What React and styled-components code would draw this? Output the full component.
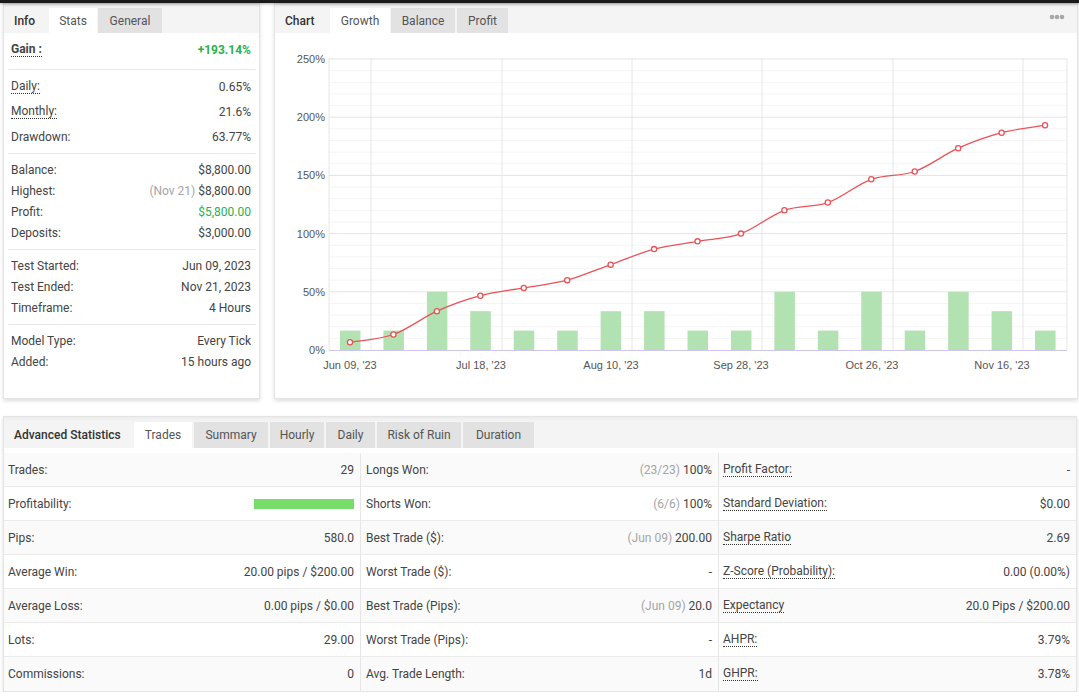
import React from 'react';
import styled, { createGlobalStyle } from 'styled-components';

const Global = createGlobalStyle`
  html, body { margin: 0; padding: 0; background: #fff; }
  body { font-family: Roboto, "Liberation Sans", Arial, sans-serif; font-size: 12px; color: #333; }
  * { box-sizing: border-box; }
`;

const TopBar = styled.div`
  height: 3px;
  background: #1b1b1b;
  box-shadow: 0 1px 3px rgba(0, 0, 0, 0.35);
  position: relative;
  z-index: 2;
`;

const Page = styled.div`
  padding: 0 1px 0 3px;
`;

const TopRow = styled.div`
  display: grid;
  grid-template-columns: 257px 804px;
  gap: 14px;
  height: 396px;
`;

const Panel = styled.div`
  background: #fff;
  border: 1px solid #e4e4e4;
  box-shadow: 0 2px 4px rgba(0, 0, 0, 0.13);
  display: flex;
  flex-direction: column;
  overflow: hidden;
`;

const BottomPanel = styled(Panel)`
  margin-top: 17px;
  width: 1074px;
`;

const TabBar = styled.div`
  display: flex;
  align-items: flex-end;
  gap: ${p => p.$gap ?? 1}px;
  height: ${p => p.$h || 29}px;
  background: linear-gradient(#ececec, #f4f4f4 4px);
  flex: none;
  padding-right: 12px;
`;

const Tab = styled.div`
  flex: none;
  width: ${p => p.$w}px;
  margin-left: ${p => p.$ml || 0}px;
  height: ${p => p.$h || 25}px;
  display: flex;
  align-items: center;
  justify-content: ${p => (p.$kind === 'label' ? 'flex-start' : 'center')};
  padding-left: ${p => (p.$kind === 'label' ? 10 : 0)}px;
  font-size: 12px;
  color: ${p => (p.$kind === 'label' ? '#333' : '#555')};
  font-weight: ${p => (p.$kind === 'label' ? 500 : 400)};
  background: ${p => (p.$kind === 'active' ? '#fff' : p.$kind === 'idle' ? '#e2e2e2' : 'transparent')};
  white-space: nowrap;
`;

const MoreDots = styled.div`
  margin-left: auto;
  align-self: center;
  margin-top: -3px;
  display: flex;
`;

const StatsBody = styled.div`
  padding: 0 3px 0 4px;
  display: flex;
  flex-direction: column;
`;

const Group = styled.div`
  padding: ${p => p.$pad || '5px 0 6px'};
  border-bottom: ${p => (p.$last ? 'none' : '1px solid #e6e6e6')};
`;

const StatRow = styled.div`
  display: flex;
  justify-content: space-between;
  align-items: center;
  height: ${p => p.$h || 21}px;
  padding: 0 5px 0 3px;
  color: #444;
`;

const Label = styled.span`
  color: #444;
  font-weight: ${p => (p.$bold ? 700 : 400)};
  ${p => p.$dotted && 'border-bottom: 1px dotted #333; line-height: 13px;'}
`;

const Value = styled.span`
  color: ${p => (p.$green ? '#27b14f' : '#444')};
  font-weight: ${p => (p.$bold ? 700 : 400)};
  white-space: nowrap;
`;

const Muted = styled.span`
  color: #a5a5a5;
`;

const ChartBody = styled.div`
  flex: 1;
`;

const ChartSvg = styled.svg`
  display: block;
  width: 802px;
  height: 366px;
`;

const Table = styled.div`
  display: grid;
  grid-template-columns: 356px 358px 358px;
  margin-top: 5px;
`;

const Column = styled.div`
  display: flex;
  flex-direction: column;
  & + & { border-left: 1px solid #e6e6e6; }
`;

const Cell = styled.div`
  display: flex;
  justify-content: space-between;
  align-items: center;
  height: 34px;
  padding: 0 6px 0 ${p => p.$pl || 5}px;
  border-bottom: 1px solid #ebebeb;
  background: ${p => (p.$odd ? '#fafafa' : '#fff')};
  &:last-child { border-bottom: none; }
  color: #444;
`;

const ProfitBar = styled.div`
  width: 100px;
  height: 10px;
  background: #78dc6a;
`;

const leftGroups = [
  { pad: '4px 0 4px', h: 25, rows: [
    ['Daily:', '0.65%', true],
    ['Monthly:', '21.6%', true],
    ['Drawdown:', '63.77%'],
  ] },
  { rows: [
    ['Balance:', '$8,800.00'],
    ['Highest:', <><Muted>(Nov 21)</Muted> $8,800.00</>],
    ['Profit:', '$5,800.00', false, true],
    ['Deposits:', '$3,000.00'],
  ] },
  { rows: [
    ['Test Started:', 'Jun 09, 2023'],
    ['Test Ended:', 'Nov 21, 2023'],
    ['Timeframe:', '4 Hours'],
  ] },
  { last: true, rows: [
    ['Model Type:', 'Every Tick'],
    ['Added:', '15 hours ago'],
  ] },
];

const col1 = [
  ['Trades:', '29'],
  ['Profitability:', 'bar'],
  ['Pips:', '580.0'],
  ['Average Win:', '20.00 pips / $200.00'],
  ['Average Loss:', '0.00 pips / $0.00'],
  ['Lots:', '29.00'],
  ['Commissions:', '0'],
];
const col2 = [
  ['Longs Won:', '(23/23)', '100%'],
  ['Shorts Won:', '(6/6)', '100%'],
  ['Best Trade ($):', '(Jun 09)', '200.00'],
  ['Worst Trade ($):', '', '-'],
  ['Best Trade (Pips):', '(Jun 09)', '20.0'],
  ['Worst Trade (Pips):', '', '-'],
  ['Avg. Trade Length:', '', '1d'],
];
const col3 = [
  ['Profit Factor:', '-'],
  ['Standard Deviation:', '$0.00'],
  ['Sharpe Ratio', '2.69'],
  ['Z-Score (Probability):', '0.00 (0.00%)'],
  ['Expectancy', '20.0 Pips / $200.00'],
  ['AHPR:', '3.79%'],
  ['GHPR:', '3.78%'],
];

const bottomTabs = [
  ['Trades', 'active', 58],
  ['Summary', 'idle', 74],
  ['Hourly', 'idle', 54],
  ['Daily', 'idle', 49],
  ['Risk of Ruin', 'idle', 84],
  ['Duration', 'idle', 71],
];

// chart geometry (page coordinates via viewBox)
const X0 = 350;
const DX = 43.44;
const ZERO = 350;
const PER = 58.2 / 50;
const trades = [1, 1, 3, 2, 1, 1, 2, 2, 1, 1, 3, 1, 3, 1, 3, 2, 1];
const points = (() => {
  let cum = 0;
  return trades.map((t, i) => {
    cum += t;
    const v = Math.min(cum * 6.6667, 193.14);
    return [X0 + i * DX, ZERO - v * PER];
  });
})();

function spline(pts) {
  let d = `M${pts[0][0]},${pts[0][1]}`;
  for (let i = 0; i < pts.length - 1; i++) {
    const p0 = pts[i - 1] || pts[i];
    const p1 = pts[i];
    const p2 = pts[i + 1];
    const p3 = pts[i + 2] || p2;
    const c1 = [p1[0] + (p2[0] - p0[0]) / 6, p1[1] + (p2[1] - p0[1]) / 6];
    const c2 = [p2[0] - (p3[0] - p1[0]) / 6, p2[1] - (p3[1] - p1[1]) / 6];
    d += ` C${c1[0].toFixed(1)},${c1[1].toFixed(1)} ${c2[0].toFixed(1)},${c2[1].toFixed(1)} ${p2[0].toFixed(1)},${p2[1].toFixed(1)}`;
  }
  return d;
}

const yTicks = [0, 50, 100, 150, 200, 250];
const xTicks = [
  [350, "Jun 09, '23"],
  [481, "Jul 18, '23"],
  [611, "Aug 10, '23"],
  [741, "Sep 28, '23"],
  [872, "Oct 26, '23"],
  [1002, "Nov 16, '23"],
];
const vLines = [371, 502, 632, 762, 893, 1023];
const PL = 329;
const PR = 1067;
const axisFont = '"Liberation Sans", Arial, sans-serif';

function GrowthChart() {
  const minor = [];
  for (let v = 10; v < 250; v += 10) {
    if (v % 50 !== 0) minor.push(ZERO - v * PER);
  }
  return (
    <ChartSvg viewBox="275 33 802 366">
      {minor.map((y, i) => (
        <line key={'m' + i} x1={PL} x2={PR} y1={y} y2={y} stroke="#f4f4f4" strokeWidth="1" />
      ))}
      {vLines.map(x => (
        <line key={'v' + x} x1={x} x2={x} y1={58} y2={ZERO} stroke="#e6e6e6" strokeWidth="1" />
      ))}
      <line x1={PL} x2={PL} y1={58} y2={ZERO} stroke="#e6e6e6" />
      <line x1={PR} x2={PR} y1={58} y2={ZERO} stroke="#e6e6e6" />
      {yTicks.map(v => {
        const y = ZERO - v * PER;
        return (
          <g key={'y' + v}>
            {v > 0 && <line x1={PL} x2={PR} y1={y} y2={y} stroke="#e4e4e4" strokeWidth="1" />}
            <text x={325} y={y + 4} textAnchor="end" fontSize="11" fill="#555" fontFamily={axisFont}>
              {v}%
            </text>
          </g>
        );
      })}
      {trades.map((t, i) => {
        const h = t * 19.4;
        return <rect key={'b' + i} x={X0 + i * DX - 10} y={ZERO - h} width={20.5} height={h} fill="#b2e1b2" />;
      })}
      <line x1={PL} x2={PR} y1={ZERO + 0.5} y2={ZERO + 0.5} stroke="#cdc6e8" strokeWidth="1" />
      <path d={spline(points)} fill="none" stroke="#e95358" strokeWidth="1.3" />
      {points.map(([x, y], i) => (
        <circle key={'p' + i} cx={x} cy={y} r="2.6" fill="#fff" stroke="#e95358" strokeWidth="1.3" />
      ))}
      {xTicks.map(([x, t]) => (
        <text key={t} x={x} y={369} textAnchor="middle" fontSize="11" fill="#555" fontFamily={axisFont}>
          {t}
        </text>
      ))}
    </ChartSvg>
  );
}

function Dots() {
  return (
    <svg width="16" height="6" viewBox="0 0 16 6">
      <circle cx="3" cy="3" r="2.3" fill="#a8a8a8" />
      <circle cx="8" cy="3" r="2.3" fill="#a8a8a8" />
      <circle cx="13" cy="3" r="2.3" fill="#a8a8a8" />
    </svg>
  );
}

export default function App() {
  return (
    <>
      <Global />
      <TopBar />
      <Page>
        <TopRow>
          <Panel>
            <TabBar $gap={0}>
              <Tab $kind="label" $w={45}>Info</Tab>
              <Tab $kind="active" $w={48}>Stats</Tab>
              <Tab $kind="idle" $w={64} $ml={1}>General</Tab>
            </TabBar>
            <StatsBody>
              <Group $pad="6px 0 9px">
                <StatRow>
                  <Label $bold $dotted>Gain :</Label>
                  <Value $bold $green>+193.14%</Value>
                </StatRow>
              </Group>
              {leftGroups.map((g, gi) => (
                <Group key={gi} $pad={g.pad} $last={g.last}>
                  {g.rows.map(([l, v, dotted, green], ri) => (
                    <StatRow key={ri} $h={g.h}>
                      <Label $dotted={dotted}>{l}</Label>
                      <Value $green={green}>{v}</Value>
                    </StatRow>
                  ))}
                </Group>
              ))}
            </StatsBody>
          </Panel>
          <Panel>
            <TabBar $gap={0}>
              <Tab $kind="label" $w={55}>Chart</Tab>
              <Tab $kind="active" $w={60}>Growth</Tab>
              <Tab $kind="idle" $w={64} $ml={1}>Balance</Tab>
              <Tab $kind="idle" $w={51} $ml={2}>Profit</Tab>
              <MoreDots><Dots /></MoreDots>
            </TabBar>
            <ChartBody>
              <GrowthChart />
            </ChartBody>
          </Panel>
        </TopRow>
        <BottomPanel>
          <TabBar $h={31} $gap={2}>
            <Tab $kind="label" $h={26} $w={128}>Advanced Statistics</Tab>
            {bottomTabs.map(([t, k, w]) => (
              <Tab key={t} $kind={k} $h={26} $w={w}>{t}</Tab>
            ))}
          </TabBar>
          <Table>
            <Column>
              {col1.map(([l, v], i) => (
                <Cell key={l} $odd={i % 2 === 0} $pl={4}>
                  <Label>{l}</Label>
                  {v === 'bar' ? <ProfitBar /> : <Value>{v}</Value>}
                </Cell>
              ))}
            </Column>
            <Column>
              {col2.map(([l, m, v], i) => (
                <Cell key={l} $odd={i % 2 === 0} $pl={5}>
                  <Label>{l}</Label>
                  <Value>{m && <Muted>{m} </Muted>}{v}</Value>
                </Cell>
              ))}
            </Column>
            <Column>
              {col3.map(([l, v], i) => (
                <Cell key={l} $odd={i % 2 === 0} $pl={4}>
                  <Label $dotted>{l}</Label>
                  <Value>{v}</Value>
                </Cell>
              ))}
            </Column>
          </Table>
        </BottomPanel>
      </Page>
    </>
  );
}
